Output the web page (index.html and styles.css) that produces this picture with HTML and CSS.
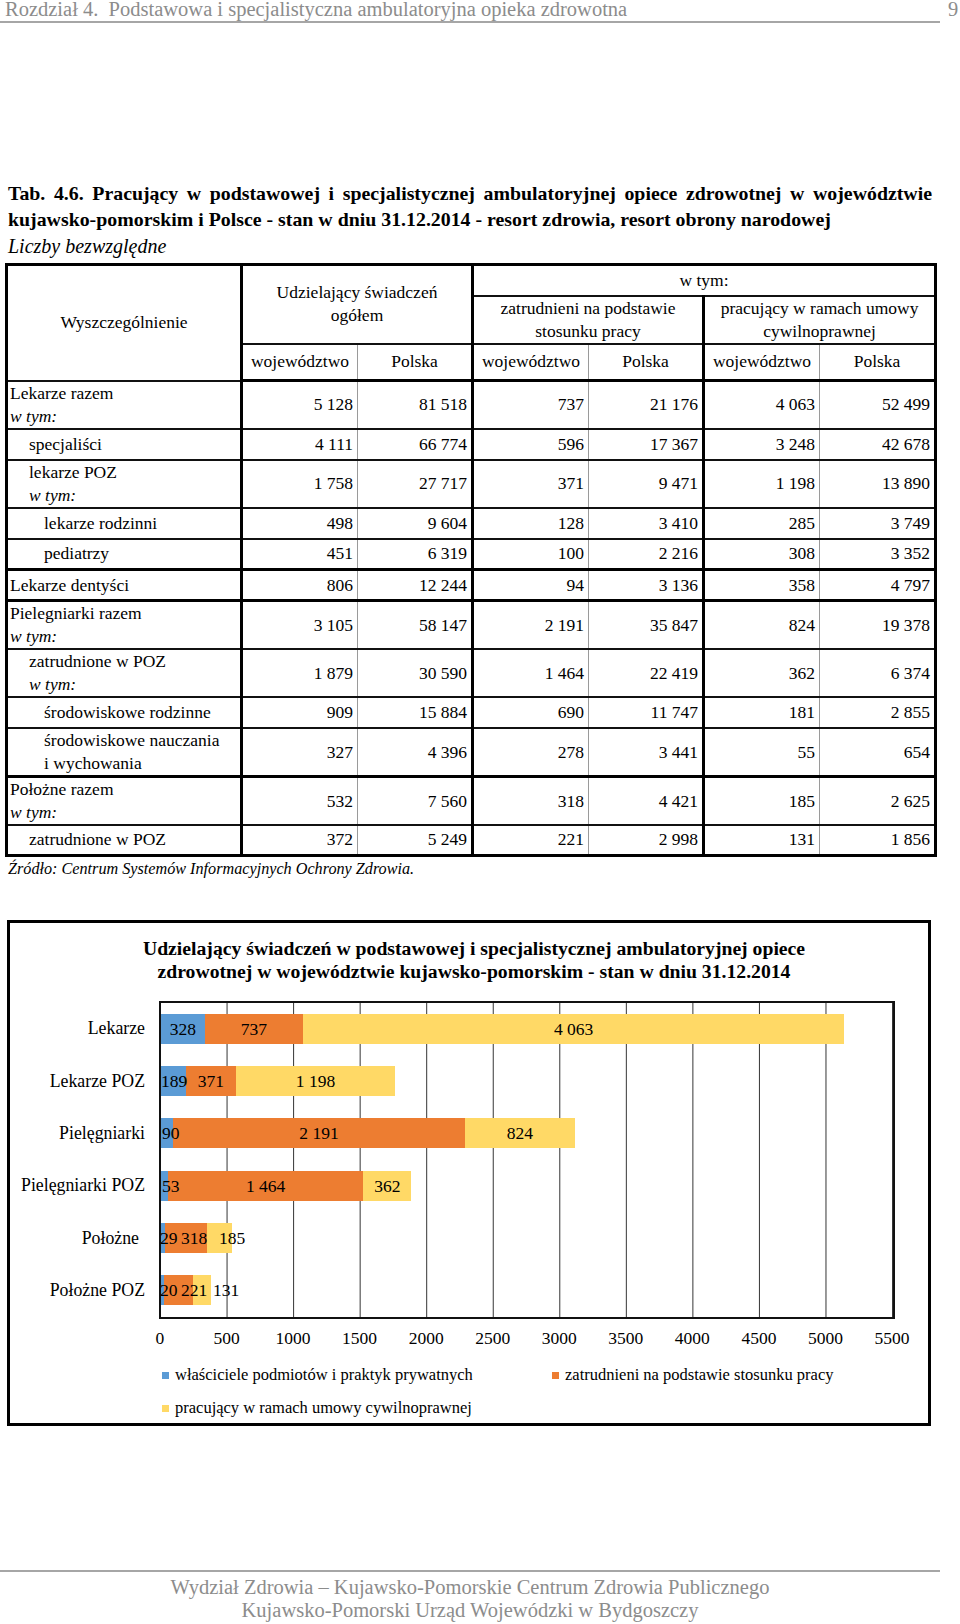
FILE: index.html
```html
<!DOCTYPE html>
<html lang="pl">
<head>
<meta charset="utf-8">
<title>Tab. 4.6</title>
<link rel="stylesheet" href="styles.css">
</head>
<body>
<div class="page">
  <header class="running-head">
    <div class="rh-title">Rozdział 4.&nbsp; Podstawowa i specjalistyczna ambulatoryjna opieka zdrowotna</div>
    <div class="rh-page">9</div>
  </header>

  <h1 class="tab-title">Tab. 4.6. Pracujący w podstawowej i specjalistycznej ambulatoryjnej opiece zdrowotnej w województwie <span class="nobr">kujawsko-pomorskim</span> i Polsce - stan w dniu 31.12.2014 - resort zdrowia, resort obrony narodowej</h1>
  <p class="subtitle">Liczby bezwzględne</p>

  <table class="stats">
    <colgroup>
      <col class="w-lbl"><col class="w-a"><col class="w-b"><col class="w-a"><col class="w-b"><col class="w-a"><col class="w-a">
    </colgroup>
    <thead>
      <tr class="hr1">
        <th rowspan="3" class="sep">Wyszczególnienie</th>
        <th rowspan="2" colspan="2" class="sep">Udzielający świadczeń<br>ogółem</th>
        <th colspan="4">w tym:</th>
      </tr>
      <tr class="hr2">
        <th colspan="2" class="sep">zatrudnieni na podstawie<br>stosunku pracy</th>
        <th colspan="2">pracujący w ramach umowy<br>cywilnoprawnej</th>
      </tr>
      <tr class="hr3">
        <th>województwo</th><th class="sep">Polska</th>
        <th>województwo</th><th class="sep">Polska</th>
        <th>województwo</th><th>Polska</th>
      </tr>
    </thead>
    <tbody>
      <tr class="dbl">
        <td class="lbl sep">Lekarze razem<br><em>w tym:</em></td>
        <td>5 128</td><td class="sep">81 518</td><td>737</td><td class="sep">21 176</td><td>4 063</td><td>52 499</td>
      </tr>
      <tr class="sgl">
        <td class="lbl l1 sep">specjaliści</td>
        <td>4 111</td><td class="sep">66 774</td><td>596</td><td class="sep">17 367</td><td>3 248</td><td>42 678</td>
      </tr>
      <tr class="dbl">
        <td class="lbl l1 sep">lekarze POZ<br><em>w tym:</em></td>
        <td>1 758</td><td class="sep">27 717</td><td>371</td><td class="sep">9 471</td><td>1 198</td><td>13 890</td>
      </tr>
      <tr class="sgl">
        <td class="lbl l2 sep">lekarze rodzinni</td>
        <td>498</td><td class="sep">9 604</td><td>128</td><td class="sep">3 410</td><td>285</td><td>3 749</td>
      </tr>
      <tr class="sgl grp">
        <td class="lbl l2 sep">pediatrzy</td>
        <td>451</td><td class="sep">6 319</td><td>100</td><td class="sep">2 216</td><td>308</td><td>3 352</td>
      </tr>
      <tr class="sgl grp">
        <td class="lbl sep">Lekarze dentyści</td>
        <td>806</td><td class="sep">12 244</td><td>94</td><td class="sep">3 136</td><td>358</td><td>4 797</td>
      </tr>
      <tr class="dbl">
        <td class="lbl sep">Pielegniarki razem<br><em>w tym:</em></td>
        <td>3 105</td><td class="sep">58 147</td><td>2 191</td><td class="sep">35 847</td><td>824</td><td>19 378</td>
      </tr>
      <tr class="dbl">
        <td class="lbl l1 sep">zatrudnione w POZ<br><em>w tym:</em></td>
        <td>1 879</td><td class="sep">30 590</td><td>1 464</td><td class="sep">22 419</td><td>362</td><td>6 374</td>
      </tr>
      <tr class="sgl">
        <td class="lbl l2 sep">środowiskowe rodzinne</td>
        <td>909</td><td class="sep">15 884</td><td>690</td><td class="sep">11 747</td><td>181</td><td>2 855</td>
      </tr>
      <tr class="dbl grp">
        <td class="lbl l2 sep">środowiskowe nauczania<br>i wychowania</td>
        <td>327</td><td class="sep">4 396</td><td>278</td><td class="sep">3 441</td><td>55</td><td>654</td>
      </tr>
      <tr class="dbl">
        <td class="lbl sep">Położne razem<br><em>w tym:</em></td>
        <td>532</td><td class="sep">7 560</td><td>318</td><td class="sep">4 421</td><td>185</td><td>2 625</td>
      </tr>
      <tr class="sgl last">
        <td class="lbl l1 sep">zatrudnione w POZ</td>
        <td>372</td><td class="sep">5 249</td><td>221</td><td class="sep">2 998</td><td>131</td><td>1 856</td>
      </tr>
    </tbody>
  </table>
  <p class="source">Źródło: Centrum Systemów Informacyjnych Ochrony Zdrowia.</p>

  <section class="chart">
    <h2 class="chart-title">Udzielający świadczeń w podstawowej i specjalistycznej ambulatoryjnej opiece<br>zdrowotnej w województwie kujawsko-pomorskim - stan w dniu 31.12.2014</h2>
    <div class="plot-wrap">
      <div class="cats">
        <div class="cat">Lekarze</div>
        <div class="cat">Lekarze POZ</div>
        <div class="cat">Pielęgniarki</div>
        <div class="cat">Pielęgniarki POZ</div>
        <div class="cat cat-short">Położne</div>
        <div class="cat">Położne POZ</div>
      </div>
      <div class="plot">
        <div class="band">
          <div class="bar">
            <i class="seg s1" style="width:43.7px"></i><i class="seg s2" style="width:98.2px"></i><i class="seg s3" style="width:541.5px"></i>
            <span class="dl" style="left:21.9px">328</span>
            <span class="dl" style="left:92.8px">737</span>
            <span class="dl" style="left:412.6px">4 063</span>
          </div>
        </div>
        <div class="band">
          <div class="bar">
            <i class="seg s1" style="width:25.2px"></i><i class="seg s2" style="width:49.4px"></i><i class="seg s3" style="width:159.7px"></i>
            <span class="dl from" style="left:0px">189</span>
            <span class="dl" style="left:49.9px">371</span>
            <span class="dl" style="left:154.5px">1 198</span>
          </div>
        </div>
        <div class="band">
          <div class="bar">
            <i class="seg s1" style="width:12px"></i><i class="seg s2" style="width:292px"></i><i class="seg s3" style="width:109.8px"></i>
            <span class="dl from" style="left:1px">90</span>
            <span class="dl" style="left:158px">2 191</span>
            <span class="dl" style="left:358.9px">824</span>
          </div>
        </div>
        <div class="band">
          <div class="bar">
            <i class="seg s1" style="width:7.1px"></i><i class="seg s2" style="width:195.1px"></i><i class="seg s3" style="width:48.2px"></i>
            <span class="dl from" style="left:1px">53</span>
            <span class="dl" style="left:104.6px">1 464</span>
            <span class="dl" style="left:226.3px">362</span>
          </div>
        </div>
        <div class="band">
          <div class="bar">
            <i class="seg s1" style="width:3.9px"></i><i class="seg s2" style="width:42.4px"></i><i class="seg s3" style="width:24.7px"></i>
            <span class="dl from" style="left:-1px">29</span>
            <span class="dl from" style="left:20px">318</span>
            <span class="dl from" style="left:58px">185</span>
          </div>
        </div>
        <div class="band">
          <div class="bar">
            <i class="seg s1" style="width:2.7px"></i><i class="seg s2" style="width:29.5px"></i><i class="seg s3" style="width:17.5px"></i>
            <span class="dl from" style="left:-1px">20</span>
            <span class="dl from" style="left:20px">221</span>
            <span class="dl from" style="left:52px">131</span>
          </div>
        </div>
      </div>
    </div>
    <div class="axis">
      <span>0</span><span>500</span><span>1000</span><span>1500</span><span>2000</span><span>2500</span><span>3000</span><span>3500</span><span>4000</span><span>4500</span><span>5000</span><span>5500</span>
    </div>
    <div class="legend">
      <div class="key"><i class="mark s1"></i>właściciele podmiotów i praktyk prywatnych</div>
      <div class="key"><i class="mark s2"></i>zatrudnieni na podstawie stosunku pracy</div>
      <div class="key"><i class="mark s3"></i>pracujący w ramach umowy cywilnoprawnej</div>
    </div>
  </section>

  <footer class="foot">
    <p>Wydział Zdrowia – Kujawsko-Pomorskie Centrum Zdrowia Publicznego</p>
    <p>Kujawsko-Pomorski Urząd Wojewódzki w Bydgoszczy</p>
  </footer>
</div>
</body>
</html>
```

FILE: styles.css
```css
* { box-sizing: border-box; }
html, body { margin: 0; padding: 0; background: #fff; }
body {
  font-family: "Liberation Serif", "Times New Roman", serif;
  color: #000;
}
.page {
  width: 960px;
  height: 1624px;
  display: flex;
  flex-direction: column;
  overflow: hidden;
}

/* running head */
.running-head {
  display: flex;
  align-items: flex-start;
  color: #8c8c8c;
  font-size: 20.5px;
  line-height: 18px;
}
.rh-title {
  width: 940px;
  padding: 0 0 3px 5px;
  border-bottom: 2px solid #a6a6a6;
  white-space: nowrap;
}
.rh-page { margin-left: 8px; }

/* title */
.tab-title {
  margin: 157px 0 0 8px;
  width: 924px;
  font-size: 19.85px;
  line-height: 26px;
  font-weight: bold;
  text-align: justify;
}
.nobr { white-space: nowrap; }
.subtitle {
  margin: 3px 0 0 8px;
  font-size: 20px;
  line-height: 22px;
  font-style: italic;
}

/* table */
.stats {
  margin: 6px 0 0 5px;
  width: 930px;
  table-layout: fixed;
  border-collapse: collapse;
  border: 3px solid #000;
  font-size: 17.5px;
  line-height: 23px;
}
.w-lbl { width: 235px; }
.w-a { width: 116px; }
.w-b { width: 115px; }
.stats th, .stats td {
  border-top: 2px solid #111;
  border-bottom: 2px solid #111;
  border-left: 1px solid #9a9a9a;
  border-right: 1px solid #9a9a9a;
  padding: 0 4px 0 2px;
  white-space: nowrap;
}
.stats th {
  font-weight: normal;
  text-align: center;
  vertical-align: middle;
  padding: 0;
}
.stats .sep { border-right: 3px solid #000; }
.hr1 { height: 31px; }
.hr2 { height: 48px; }
.hr3 { height: 37px; }
.hr3 th { border-bottom: 3px solid #000; }
.stats td { text-align: right; vertical-align: middle; }
.stats td.lbl { text-align: left; }
.stats td.l1 { padding-left: 21px; }
.stats td.l2 { padding-left: 36px; }
.stats em { font-style: italic; }
.sgl { height: 31px; }
.dbl { height: 48px; }
.stats tr.last { height: 30px; }
.grp td { border-bottom: 3px solid #000; }

.source {
  margin: 2px 0 0 8px;
  font-size: 16.2px;
  line-height: 20px;
  font-style: italic;
}

/* chart */
.chart {
  margin: 41px 0 0 7px;
  width: 924px;
  height: 506px;
  border: 3px solid #000;
}
.chart-title {
  margin: 14px 0 0 0;
  padding-left: 10px;
  font-size: 19.7px;
  line-height: 23px;
  font-weight: bold;
  text-align: center;
}
.plot-wrap {
  display: flex;
  margin-top: 18px;
}
.cats {
  width: 149px;
  padding: 2px 14px 2px 0;
  display: flex;
  flex-direction: column;
  font-size: 17.8px;
}
.cat {
  height: 52.4px;
  display: flex;
  align-items: center;
  justify-content: flex-end;
}
.cat-short { padding-right: 6px; }
.plot {
  width: 736px;
  height: 318px;
  border: 2px solid #111;
  background-image: linear-gradient(to right, transparent 0, transparent 65.55px, #333 65.55px, #333 66.55px);
  background-size: 66.55px 100%;
  background-repeat: repeat-x;
  display: flex;
  flex-direction: column;
}
.band {
  height: 52.33px;
  display: flex;
  align-items: center;
}
.bar {
  position: relative;
  display: flex;
  height: 30px;
  font-size: 17.5px;
}
.seg { display: block; height: 30px; }
.s1 { background: #5b9bd5; }
.s2 { background: #ed7d31; }
.s3 { background: #ffd966; }
.dl {
  position: absolute;
  top: 0;
  line-height: 30px;
  white-space: nowrap;
  transform: translateX(-50%);
}
.dl.from { transform: none; }

.axis {
  display: flex;
  margin-left: 116.7px;
  height: 40px;
  align-items: center;
  font-size: 17.5px;
}
.axis span {
  width: 66.55px;
  text-align: center;
  flex: none;
}
.legend {
  display: grid;
  grid-template-columns: 390px auto;
  grid-auto-rows: 33px;
  margin-left: 152px;
  font-size: 16.5px;
}
.key {
  display: flex;
  align-items: center;
  white-space: nowrap;
}
.mark {
  display: block;
  width: 7px;
  height: 7px;
  margin-right: 6px;
}

/* footer */
.foot {
  margin-top: auto;
  width: 940px;
  border-top: 2px solid #a6a6a6;
  padding: 3.5px 0 2.5px;
  color: #8c8c8c;
  font-size: 20.5px;
  line-height: 23px;
  text-align: center;
}
.foot p { margin: 0; }
```
